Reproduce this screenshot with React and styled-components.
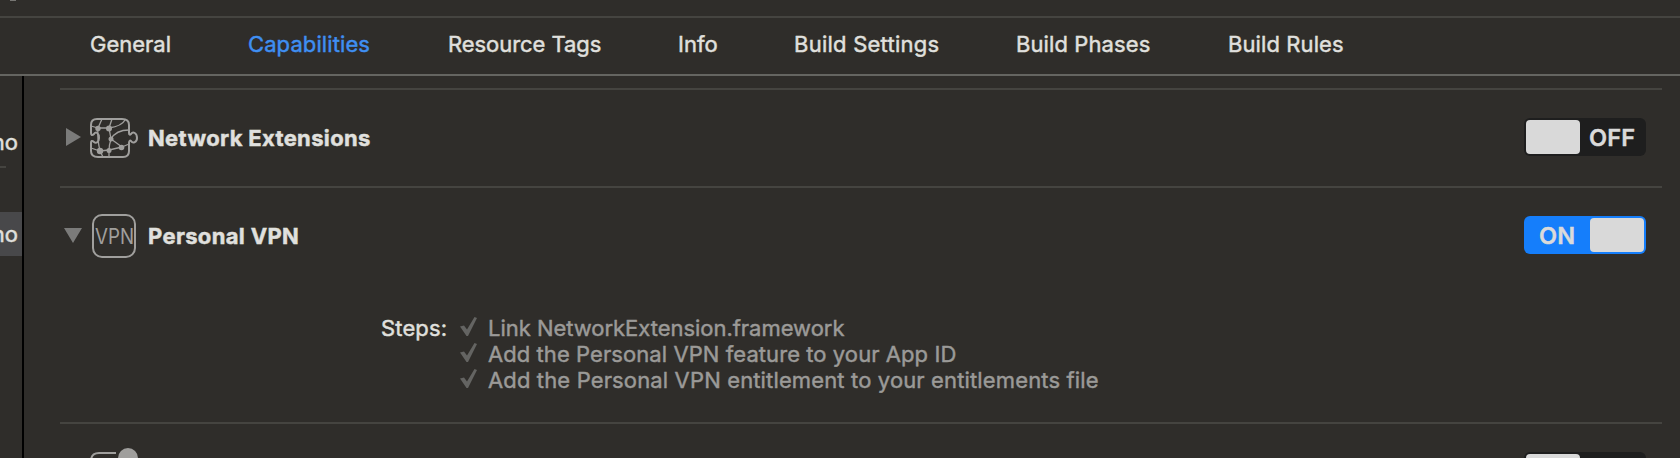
import React from "react";
import styled, { createGlobalStyle } from "styled-components";

const GlobalStyle = createGlobalStyle`
  * { box-sizing: border-box; }
  body {
    margin: 0;
    background: #2f2d2a;
    color: #e0e0de;
    font-family: Inter, "Liberation Sans", sans-serif;
    font-size: 22px;
    -webkit-text-stroke: 0.45px currentColor;
    overflow: hidden;
  }
`;

const Window = styled.div`
  width: 1680px;
  height: 458px;
  display: flex;
  flex-direction: column;
  overflow: hidden;
  background: #2f2d2a;
`;

const TopStrip = styled.div`
  height: 18px;
  flex: none;
  padding-left: 10px;
  border-bottom: 2px solid #454440;
`;

const TopMark = styled.div`
  width: 6px;
  height: 1px;
  background: #777673;
`;

const TabBar = styled.nav`
  height: 58px;
  flex: none;
  display: flex;
  padding-left: 90px;
  border-bottom: 2px solid #656561;
`;

const Tab = styled.a`
  flex: none;
  width: ${(p) => p.$width}px;
  line-height: 53px;
  white-space: nowrap;
  letter-spacing: ${(p) => p.$spacing || 0}px;
  color: ${(p) => (p.$active ? "#3f8ff2" : "#e0e0de")};
`;

const Body = styled.div`
  flex: 1;
  min-height: 0;
  display: flex;
`;

const Sidebar = styled.aside`
  width: 24px;
  flex: none;
  padding-top: 44px;
  border-right: 2px solid #000;
`;

const SidebarItem = styled.div`
  height: 44px;
  display: flex;
  justify-content: flex-end;
  overflow: hidden;
  padding-right: 4px;
  line-height: 45px;
  background: ${(p) => (p.$selected ? "#48484a" : "transparent")};
`;

const SidebarRule = styled.div`
  width: 6px;
  height: 2px;
  margin: 2px 0 44px;
  background: #454440;
`;

const Content = styled.main`
  flex: 1;
  padding: 12px 18px 0 36px;
  overflow: hidden;
`;

const Section = styled.section`
  height: ${(p) => p.$height}px;
  border-top: 2px solid #454440;
`;

const SectionHeader = styled.header`
  height: 96px;
  display: flex;
  align-items: center;
  padding: 0 16px 2px 4px;
`;

const Disclosure = styled.svg`
  width: 20px;
  height: 20px;
  flex: none;
  fill: #7b7b7a;
`;

const Icon = styled.svg`
  width: 50px;
  height: 48px;
  flex: none;
  margin-left: 4px;
  fill: none;
  stroke: #a09f9d;
  stroke-width: 2;
`;

const Title = styled.h2`
  flex: 1;
  margin: 0 0 0 10px;
  padding-top: 2px;
  font-size: 22px;
  font-weight: 700;
  line-height: 26px;
  letter-spacing: 0.35px;
`;

const Switch = styled.div`
  width: 122px;
  height: 38px;
  flex: none;
  display: flex;
  flex-direction: ${(p) => (p.$on ? "row-reverse" : "row")};
  padding: 2px;
  border-radius: 6px;
  background: ${(p) => (p.$on ? "#157efb" : "#1e1e1e")};
`;

const Knob = styled.div`
  width: 54px;
  height: 34px;
  border-radius: 4px;
  background: #d9d9d9;
`;

const SwitchText = styled.span`
  flex: 1;
  padding-left: ${(p) => (p.$on ? 13 : 9)}px;
  font-size: 23.5px;
  font-weight: 600;
  line-height: 35px;
  letter-spacing: 0.2px;
  color: #dadada;
`;

const Steps = styled.div`
  display: flex;
  padding: 31px 0 0 321px;
  line-height: 26px;
`;

const StepsLabel = styled.div`
  width: 79px;
  letter-spacing: 0.15px;
`;

const StepList = styled.ul`
  margin: 0;
  padding: 0;
  list-style: none;
`;

const Step = styled.li`
  display: flex;
  height: 26px;
  color: #9b9a98;
  white-space: nowrap;
  letter-spacing: ${(p) => p.$spacing || 0}px;
`;

const Check = styled.svg`
  width: 17px;
  height: 20px;
  margin: 2px 11px 0 0;
  fill: #646462;
`;

function Toggle({ on }) {
  return (
    <Switch $on={on}>
      <Knob />
      <SwitchText $on={on}>{on ? "ON" : "OFF"}</SwitchText>
    </Switch>
  );
}

function NetworkIcon() {
  return (
    <Icon viewBox="0 0 50 48">
      <path d="M3 20V12Q3 6 9 6H34Q41 6 41 12V20C41 22 42 22 43 21C45 18 49 20 49 25C49 29 45 31 43 28C42 27 41 28 41 30V38Q41 44 35 44H10Q3 44 3 38V30C3 28 4 27 6 29C8 31 11 29 11 25C11 20 8 18 6 21C4 23 3 22 3 20" />
      <g strokeWidth="1.3">
        <path d="M14 6L10 15L3 13M10 15H21L24 6M21 15Q34 13 37 7M10 15Q9 25 12 38L15 44M21 15L23 26Q28 17 41 17M23 26Q21 32 21 38V44M23 26L34 34M34 34L21 37L12 38L3 35M34 34L41 31" />
      </g>
      <g fill="#a09f9d" stroke="none">
        <circle cx="10" cy="15.5" r="2.7" />
        <circle cx="21" cy="15.5" r="3" />
        <circle cx="23" cy="26" r="2.5" />
        <circle cx="33.5" cy="34.5" r="2.8" />
        <circle cx="12" cy="38" r="3.2" />
        <circle cx="21" cy="37.5" r="2.5" />
      </g>
    </Icon>
  );
}

function VpnIcon() {
  return (
    <Icon viewBox="0 0 50 48">
      <rect x="5" y="4" width="42" height="42" rx="9" />
      <text
        x="7"
        y="33"
        fill="#a09f9d"
        stroke="none"
        fontSize="22"
        fontWeight="400"
        textLength="39"
        lengthAdjust="spacingAndGlyphs"
      >
        VPN
      </text>
    </Icon>
  );
}

function PartialIcon() {
  return (
    <Icon viewBox="0 0 50 48">
      <path d="M3 20V14Q3 6 11 6H28" />
      <circle cx="40" cy="11" r="10" fill="#a09f9d" stroke="none" />
    </Icon>
  );
}

const tabs = [
  ["General", 158, 0],
  ["Capabilities", 200, 0.1],
  ["Resource Tags", 230, -0.05],
  ["Info", 116, 0],
  ["Build Settings", 222, 0.24],
  ["Build Phases", 212, 0.1],
  ["Build Rules", 140, 0.1],
];

const steps = [
  ["Link NetworkExtension.framework", -0.03],
  ["Add the Personal VPN feature to your App ID", 0.07],
  ["Add the Personal VPN entitlement to your entitlements file", 0.14],
];

export default function App() {
  return (
    <>
      <GlobalStyle />
      <Window>
        <TopStrip>
          <TopMark />
        </TopStrip>
        <TabBar>
          {tabs.map(([label, width, spacing]) => (
            <Tab
              key={label}
              $width={width}
              $spacing={spacing}
              $active={label === "Capabilities"}
            >
              {label}
            </Tab>
          ))}
        </TabBar>
        <Body>
          <Sidebar>
            <SidebarItem>no</SidebarItem>
            <SidebarRule />
            <SidebarItem $selected>no</SidebarItem>
          </Sidebar>
          <Content>
            <Section $height={98}>
              <SectionHeader>
                <Disclosure viewBox="0 0 20 20">
                  <path d="M2 1L17 10L2 19Z" />
                </Disclosure>
                <NetworkIcon />
                <Title>Network Extensions</Title>
                <Toggle />
              </SectionHeader>
            </Section>
            <Section $height={236}>
              <SectionHeader>
                <Disclosure viewBox="0 0 20 20">
                  <path d="M0 3H18L9 18Z" />
                </Disclosure>
                <VpnIcon />
                <Title>Personal VPN</Title>
                <Toggle on />
              </SectionHeader>
              <Steps>
                <StepsLabel>Steps:</StepsLabel>
                <StepList>
                  {steps.map(([text, spacing]) => (
                    <Step key={text} $spacing={spacing}>
                      <Check viewBox="0 0 17 20">
                        <path d="M0 9.500L4 8.500L7 12.500L14.500 0L17 1L8 19H6.500Z" />
                      </Check>
                      {text}
                    </Step>
                  ))}
                </StepList>
              </Steps>
            </Section>
            <Section $height={98}>
              <SectionHeader>
                <Disclosure viewBox="0 0 20 20">
                  <path d="M2 1L17 10L2 19Z" />
                </Disclosure>
                <PartialIcon />
                <Title />
                <Toggle />
              </SectionHeader>
            </Section>
          </Content>
        </Body>
      </Window>
    </>
  );
}
